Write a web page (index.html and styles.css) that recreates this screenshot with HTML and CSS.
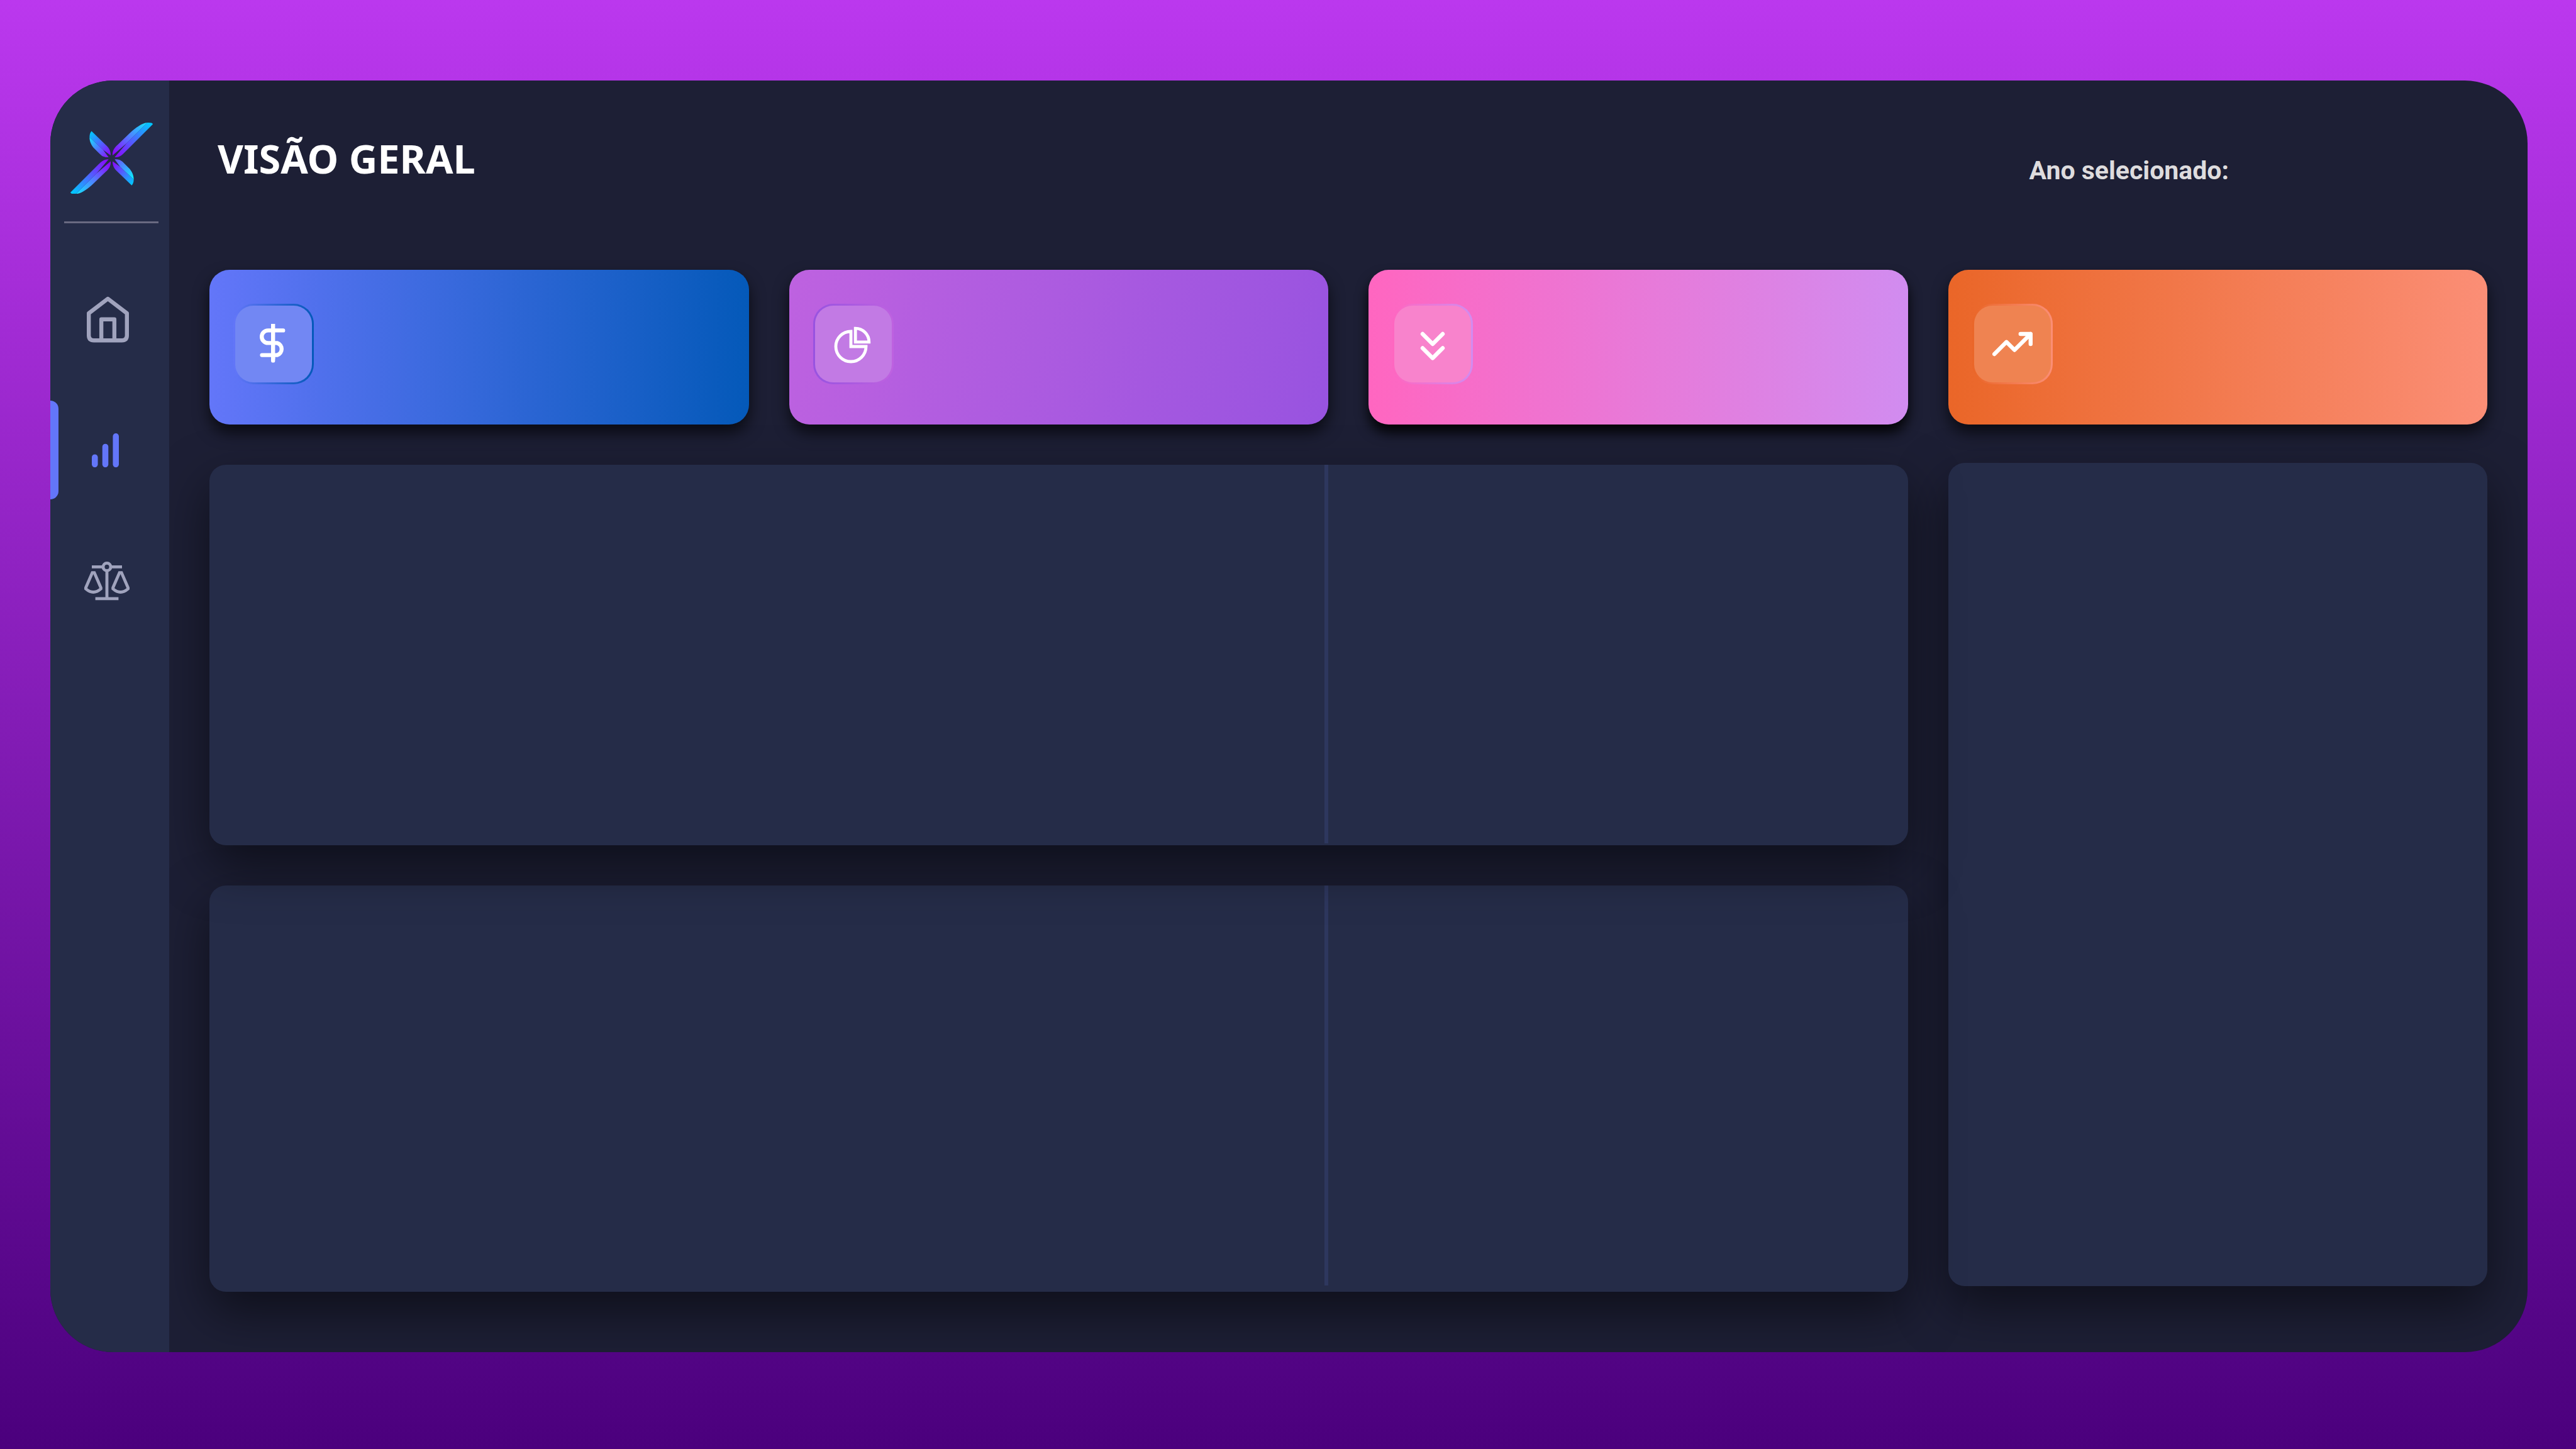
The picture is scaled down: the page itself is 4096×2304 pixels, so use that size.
FILE: index.html
```html
<!DOCTYPE html>
<html lang="pt-BR">
<head>
<meta charset="utf-8">
<meta name="viewport" content="width=device-width, initial-scale=1">
<title>Visão Geral</title>
<link rel="stylesheet" href="styles.css">
</head>
<body>
<div class="app">
  <aside class="sidebar">
    <a class="logo" href="#" aria-label="Início">
      <svg viewBox="0 0 164 142" aria-hidden="true">
        <defs>
          <linearGradient id="arm-ne" gradientUnits="userSpaceOnUse" x1="86" y1="68" x2="160" y2="2">
            <stop offset="0" stop-color="#9000ff"/><stop offset=".5" stop-color="#4f62ff"/><stop offset="1" stop-color="#00c8ff"/>
          </linearGradient>
          <linearGradient id="edge-ne" gradientUnits="userSpaceOnUse" x1="84" y1="62" x2="150" y2="2">
            <stop offset="0" stop-color="#9000ff"/><stop offset=".5" stop-color="#5577ff"/><stop offset="1" stop-color="#18dcff"/>
          </linearGradient>
          <linearGradient id="arm-nw" gradientUnits="userSpaceOnUse" x1="80" y1="66" x2="40" y2="20">
            <stop offset="0" stop-color="#9000ff"/><stop offset=".5" stop-color="#4f62ff"/><stop offset="1" stop-color="#00c8ff"/>
          </linearGradient>
          <linearGradient id="edge-nw" gradientUnits="userSpaceOnUse" x1="76" y1="68" x2="38" y2="32">
            <stop offset="0" stop-color="#8c10ff"/><stop offset=".5" stop-color="#4f78ff"/><stop offset="1" stop-color="#18dcff"/>
          </linearGradient>
          <linearGradient id="edge-se" gradientUnits="userSpaceOnUse" x1="88" y1="76" x2="126" y2="112">
            <stop offset="0" stop-color="#6a50ff"/><stop offset=".5" stop-color="#3aa4ff"/><stop offset="1" stop-color="#08f4ff"/>
          </linearGradient>
        </defs>
        <g>
          <path fill="url(#edge-ne)" d="M84 65C83 57 87 50 94 44L118 21C130 10 142 1 153 0L112 41Z"/>
          <path fill="url(#arm-ne)" d="M153 0C158 0 163 0 164 3L107 60C101 66 96 69 88 69L112 41Z"/>
        </g>
        <g transform="rotate(180 82 71)">
          <path fill="url(#edge-ne)" d="M84 65C83 57 87 50 94 44L118 21C130 10 142 1 153 0L112 41Z"/>
          <path fill="url(#arm-ne)" d="M153 0C158 0 163 0 164 3L107 60C101 66 96 69 88 69L112 41Z"/>
        </g>
        <path fill="url(#arm-nw)" d="M38 29C38 23 40 19 42 17L72 46C78 52 80 57 80 65L65 54Z"/>
        <path fill="url(#edge-nw)" d="M38 29C38 38 42 46 48 52L58 62C64 68 68 69 76 69L65 54Z"/>
        <g transform="rotate(180 82 71)">
          <path fill="url(#arm-nw)" d="M38 29C38 23 40 19 42 17L72 46C78 52 80 57 80 65L65 54Z"/>
        </g>
        <path fill="url(#edge-se)" d="M126 113C126 104 122 96 116 90L106 80C100 74 96 73 88 73L99 88Z"/>
      </svg>
    </a>
    <hr class="sidebar-rule">
    <nav class="nav" aria-label="Principal">
      <a class="nav-item" href="#" aria-label="Início">
        <svg class="icon-home" viewBox="0 0 84 92" fill="none" stroke="currentColor" stroke-width="8" stroke-linejoin="round" aria-hidden="true">
          <path d="M4 34L42 5L80 34V78Q80 88 70 88H14Q4 88 4 78Z"/>
          <path d="M29 88V46H55V88"/>
        </svg>
      </a>
      <a class="nav-item active" href="#" aria-label="Visão geral" aria-current="page">
        <svg class="icon-bars" viewBox="0 0 54 68" fill="currentColor" aria-hidden="true">
          <rect x="0" y="42" width="12" height="26" rx="6"/>
          <rect x="21" y="21" width="12" height="47" rx="6"/>
          <rect x="42" y="0" width="12" height="68" rx="6"/>
        </svg>
      </a>
      <a class="nav-item" href="#" aria-label="Balanço">
        <svg class="icon-scale" viewBox="0 0 90 77" fill="none" stroke="currentColor" stroke-width="6" aria-hidden="true">
          <circle cx="45" cy="10.500" r="7.500"/>
          <path d="M15 10.500H37M53 10.500H75M45 18V73M22 73.500H68"/>
          <path d="M16 22H20L33 52V54Q18 67 3 54V52Z"/>
          <path d="M70 22H74L87 52V54Q72 67 57 54V52Z"/>
        </svg>
      </a>
    </nav>
  </aside>
  <main class="main">
    <header class="header">
      <h1 class="title">VISÃO GERAL</h1>
      <p class="year">Ano selecionado:</p>
    </header>
    <section class="cards" aria-label="Indicadores">
      <article class="card card-blue">
        <div class="badge"><svg class="icon" viewBox="0 0 80 80" fill="none" stroke="#fff" stroke-width="8" stroke-linecap="round" stroke-linejoin="round" aria-hidden="true"><path d="M39 0V70" stroke-linecap="butt"/><path d="M39 60V73M59 13H29A12.500 12.500 0 0 0 29 38H47A12.500 12.500 0 0 1 47 62H17"/></svg></div>
      </article>
      <article class="card card-purple">
        <div class="badge"><svg class="icon" viewBox="0 0 80 80" fill="none" stroke="#fff" stroke-width="6" aria-hidden="true"><path d="M35 15A30 30 0 1 0 65 45H35Z"/><path d="M44 9V36H71A27 27 0 0 0 44 9Z"/></svg></div>
      </article>
      <article class="card card-pink">
        <div class="badge"><svg class="icon" viewBox="0 0 80 80" fill="none" stroke="#fff" stroke-width="8" stroke-linecap="round" stroke-linejoin="round" aria-hidden="true"><path d="M20 20L40 40L60 20M20 48L40 68L60 48"/></svg></div>
      </article>
      <article class="card card-orange">
        <div class="badge"><svg class="icon" viewBox="0 0 80 80" fill="none" stroke="#fff" stroke-width="8" stroke-linecap="round" stroke-linejoin="round" aria-hidden="true"><path d="M4 60L28 36L44 52L76 20M56 20H76V40"/></svg></div>
      </article>
    </section>
    <div class="panels">
      <div class="panel-stack">
        <section class="panel panel-split"><div class="pane pane-main"></div><div class="pane"></div></section>
        <section class="panel panel-split panel-tall"><div class="pane pane-main"></div><div class="pane"></div></section>
      </div>
      <section class="panel panel-side"></section>
    </div>
  </main>
</div>
</body>
</html>
```
FILE: styles.css
```css
* {
  box-sizing: border-box;
}

body {
  margin: 0;
  min-height: 100vh;
  display: flex;
  padding: 128px 77px 154px 80px;
  background: linear-gradient(180deg, #bb38ee 0%, #4b007d 100%);
  font-family: "Noto Sans", "Open Sans", sans-serif;
}

.app {
  flex: 1;
  display: flex;
  overflow: hidden;
  border-radius: 100px;
  background: #1d1f35;
}

.sidebar {
  position: relative;
  z-index: 2;
  flex: none;
  width: 189px;
  display: flex;
  flex-direction: column;
  background: #252c48;
}

.logo {
  display: block;
  width: 131px;
  margin: 67px 0 0 32px;
}

.logo svg {
  display: block;
  width: 100%;
}

.sidebar-rule {
  width: 150px;
  height: 3px;
  margin: 44px 0 0 22px;
  border: 0;
  background: #696a81;
}

.nav {
  display: flex;
  flex-direction: column;
  gap: 51px;
  margin-top: 74px;
}

.nav-item {
  display: flex;
  align-items: center;
  height: 157px;
  padding-left: 54px;
  color: #a0a3bd;
}

.nav-item.active {
  padding-left: 0;
  color: #6376f9;
}

.nav-item.active::before {
  content: "";
  width: 13px;
  height: 157px;
  margin-right: 53px;
  border-radius: 0 13px 13px 0;
  background: currentColor;
}

.icon-home {
  width: 67px;
  margin-left: 4px;
}

.icon-bars {
  width: 43px;
}

.icon-scale {
  width: 72px;
}

.main {
  flex: 1;
  display: flex;
  flex-direction: column;
  padding: 0 64px 96px;
}

.header {
  display: flex;
  justify-content: space-between;
  align-items: flex-start;
  height: 301px;
  padding: 80px 411px 0 13px;
}

.title {
  margin: 0;
  color: #fff;
  font-size: 63px;
  font-weight: 700;
  line-height: 88px;
}

.year {
  margin: 35px 0 0;
  color: #dedcde;
  font-family: Roboto, sans-serif;
  font-size: 41px;
  font-weight: 700;
  line-height: 56px;
}

.cards {
  display: grid;
  grid-template-columns: repeat(4, 1fr);
  gap: 64px;
}

.card {
  position: relative;
  z-index: 1;
  height: 246px;
  padding: 54px 38px;
  border-radius: 32px;
  background: linear-gradient(90deg, var(--from), var(--to));
  box-shadow: 0 13px 24px rgba(0, 0, 0, .65);
}

.card-blue {
  --from: #6376f9;
  --to: #0459b9;
  --edge-from: #6376f9;
  --edge-to: #0459b9;
  --fill: #7287f3;
}

.card-purple {
  --from: #be62e0;
  --to: #9853e0;
  --edge-from: #9853e0;
  --edge-to: #be62e0;
  --fill: #c27ae4;
  background: linear-gradient(106deg, var(--from), var(--to));
}

.card-pink {
  --from: #ff66c0;
  --to: #d18cf0;
  --edge-from: #ff66c0;
  --edge-to: #d18cf0;
  --fill: #f883cc;
  box-shadow: 0 13px 20px rgba(0, 0, 0, .9);
}

.card-orange {
  --from: #ea6628;
  --to: #fb8e76;
  --edge-from: #ea6628;
  --edge-to: #fb8e76;
  --fill: #ef8351;
}

.badge {
  display: flex;
  align-items: center;
  justify-content: center;
  width: 128px;
  height: 128px;
  border: 3px solid transparent;
  border-radius: 32px;
  background:
    linear-gradient(var(--fill), var(--fill)) padding-box,
    linear-gradient(90deg, var(--edge-from), var(--edge-to)) border-box;
}

.icon {
  width: 64px;
  height: 64px;
}

.panels {
  flex: 1;
  display: grid;
  grid-template-columns: repeat(4, 1fr);
  gap: 64px;
  padding-top: 61px;
}

.panel-stack {
  grid-column: span 3;
  display: flex;
  flex-direction: column;
  gap: 64px;
  padding-top: 3px;
}

.panel {
  border-radius: 26px;
  background: #252c48;
  box-shadow: 0 32px 80px rgba(0, 0, 0, .5);
}

.panel-split {
  position: relative;
  z-index: 1;
  flex: 602;
  display: grid;
  grid-template-columns: 1779fr 922fr;
  padding-bottom: 3px;
}

.panel-tall {
  z-index: 0;
  flex: 636;
  padding-bottom: 10px;
}

.pane-main {
  border-right: 6px solid #2e375e;
}

.panel-side {
  margin-bottom: 9px;
}
```
